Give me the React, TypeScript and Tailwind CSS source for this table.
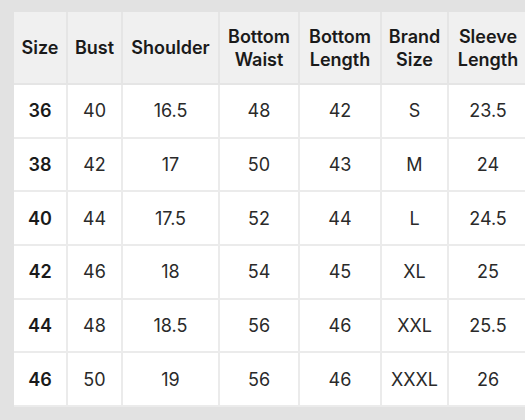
import React from "react";

const rows = [
  ["36", "40", "16.5", "48", "42", "S", "23.5"],
  ["38", "42", "17", "50", "43", "M", "24"],
  ["40", "44", "17.5", "52", "44", "L", "24.5"],
  ["42", "46", "18", "54", "45", "XL", "25"],
  ["44", "48", "18.5", "56", "46", "XXL", "25.5"],
  ["46", "50", "19", "56", "46", "XXXL", "26"],
];

const widths = [53, 55, 97, 80, 82, 67, 80];

export default function App() {
  return (
    <div
      className="w-[525px] h-[420px] overflow-hidden bg-[#e2e2e2] pt-[12px] pl-[14px]"
      style={{ fontFamily: "Inter, 'Noto Sans', sans-serif" }}
    >
      <table className="border-collapse table-fixed text-[#222] w-[514px]">
        <colgroup>
          {widths.map((w, i) => (
            <col key={i} style={{ width: w }} />
          ))}
        </colgroup>
        <thead>
          <tr className="h-[72px] bg-[#f0f0f0]">
            {[
              ["Size"],
              ["Bust"],
              ["Shoulder"],
              ["Bottom", "Waist"],
              ["Bottom", "Length"],
              ["Brand", "Size"],
              ["Sleeve", "Length"],
            ].map((h, i) => (
              <th
                key={i}
                className="border-x-2 border-b-2 border-[#e5e5e5] first:border-l-0 text-[18px] font-semibold leading-[23px] text-[#1a1a1a] p-0 text-center"
              >
                {h.map((l, j) => (
                  <div key={j}>{l}</div>
                ))}
              </th>
            ))}
          </tr>
        </thead>
        <tbody>
          {rows.map((r, ri) => (
            <tr key={ri} className="h-[53.7px] bg-white">
              {r.map((c, ci) => (
                <td
                  key={ci}
                  className={`border-x-2 border-b-2 border-[#ebebeb] first:border-l-0 p-0 text-center text-[18px] ${
                    ci === 0 ? "font-semibold text-[#1a1a1a]" : "font-normal text-[#2a2a2a]"
                  }`}
                >
                  {c}
                </td>
              ))}
            </tr>
          ))}
        </tbody>
      </table>
    </div>
  );
}
